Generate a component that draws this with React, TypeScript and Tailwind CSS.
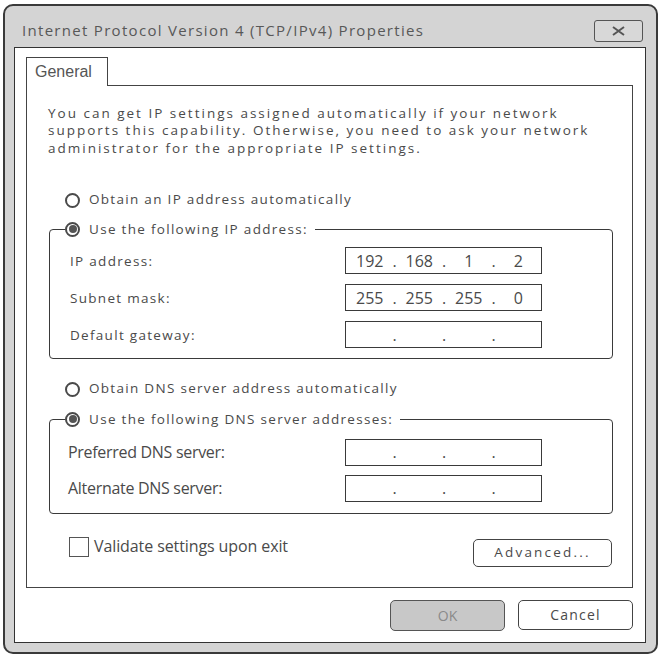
import React from "react";

const sans = "font-['Open_Sans',sans-serif]";

function Radio({ checked }: { checked?: boolean }) {
  return (
    <span className="grid h-[15px] w-[15px] shrink-0 place-items-center rounded-full border-2 border-[#4a4a4a] bg-white">
      {checked && <span className="h-[8px] w-[8px] rounded-full bg-[#555]" />}
    </span>
  );
}

function IpBox({ parts }: { parts: string[] }) {
  return (
    <div className="flex h-[27px] w-[197px] items-center border-[1.5px] border-[#3a3a3a] bg-white pl-[1px] text-[16px] text-[#4a4a4a]">
      {parts.map((p, i) => (
        <React.Fragment key={i}>
          {i > 0 && <span className="w-[4px] text-center">.</span>}
          <span className="w-[46px] text-center">{p}</span>
        </React.Fragment>
      ))}
    </div>
  );
}

function Row({ label, parts, tracked }: { label: string; parts: string[]; tracked?: boolean }) {
  return (
    <div className="flex items-center">
      <span
        className={
          tracked
            ? "w-[295px] pl-[20px] text-[13.5px] tracking-[1.3px] text-[#4a4a4a]"
            : "w-[295px] pl-[18px] text-[16px] tracking-[-0.3px] text-[#4a4a4a]"
        }
      >
        {label}
      </span>
      <IpBox parts={parts} />
    </div>
  );
}

function Group({ legend, children }: { legend: string; children: React.ReactNode }) {
  return (
    <fieldset className="ml-[22px] mr-[19px] rounded-[4px] border-[1.5px] border-[#3a3a3a]">
      <legend className="ml-[15px] flex items-center gap-[9px] pr-[7px] text-[13.5px] tracking-[1.3px] text-[#4a4a4a]">
        <Radio checked />
        <span>{legend}</span>
      </legend>
      {children}
    </fieldset>
  );
}

export default function App() {
  const empty = ["", "", "", ""];
  return (
    <div className={`h-[657px] w-[660px] bg-white pl-[3px] pt-[4px] ${sans}`}>
      <div className="flex h-[650px] w-[655px] flex-col rounded-[10px] border-2 border-[#3a3a3a] bg-[#d4d4d4] pb-[9px] pl-[9px] pr-[10px]">
        <div className="flex h-[41px] items-center justify-between pl-[8px] pr-[3px]">
          <span className="mt-[8px] text-[15px] tracking-[1.3px] text-[#585858]">
            Internet Protocol Version 4 (TCP/IPv4) Properties
          </span>
          <button className="mt-[8px] grid h-[22px] w-[49px] place-items-center rounded-[3px] border-[1.5px] border-[#555] bg-[#d8d8d8]">
            <svg width="13" height="10" viewBox="0 0 13 10">
              <path d="M1 1 L12 9 M12 1 L1 9" stroke="#555" strokeWidth="2" />
            </svg>
          </button>
        </div>

        <div className="flex flex-1 flex-col border-[1.5px] border-[#333] bg-white pl-[11px] pr-[12px] pt-[9px]">
          <div className="relative z-10 -mb-[1.5px] flex h-[29px] w-[82px] items-start border-[1.5px] border-b-0 border-[#444] bg-white pl-[8px] pt-[2px] font-['Liberation_Sans',sans-serif] text-[16px] text-[#555]">
            General
          </div>
          <div className="h-[503px] border-[1.5px] border-[#444]">
            <p className="ml-[21px] mt-[19px] text-[13.5px] leading-[17.5px] tracking-[2px] text-[#4a4a4a]">
              You can get IP settings assigned automatically if your network
              <br />
              supports this capability. Otherwise, you need to ask your network
              <br />
              administrator for the appropriate IP settings.
            </p>

            <div className="ml-[38px] mt-[33px] flex h-[20px] items-center gap-[9px] text-[13.5px] tracking-[1.3px] text-[#4a4a4a]">
              <Radio />
              <span className="-mt-[2px]">Obtain an IP address automatically</span>
            </div>

            <div className="mt-[9px]">
              <Group legend="Use the following IP address:">
                <div className="flex flex-col gap-[10px] pb-[10px] pt-[8px]">
                  <Row label="IP address:" parts={["192", "168", "1", "2"]} tracked />
                  <Row label="Subnet mask:" parts={["255", "255", "255", "0"]} tracked />
                  <Row label="Default gateway:" parts={empty} tracked />
                </div>
              </Group>
            </div>

            <div className="ml-[38px] mt-[20px] flex h-[20px] items-center gap-[9px] text-[13.5px] tracking-[1.3px] text-[#4a4a4a]">
              <Radio />
              <span className="-mt-[2px]">Obtain DNS server address automatically</span>
            </div>

            <div className="mt-[10px]">
              <Group legend="Use the following DNS server addresses:">
                <div className="flex flex-col gap-[9px] pb-[11px] pt-[9px]">
                  <Row label="Preferred DNS server:" parts={empty} />
                  <Row label="Alternate DNS server:" parts={empty} />
                </div>
              </Group>
            </div>

            <div className="ml-[42px] mr-[20px] mt-[22px] flex items-start justify-between">
              <label className="flex items-center gap-[5px] text-[16px] tracking-[-0.1px] text-[#4a4a4a]">
                <span className="h-[20px] w-[20px] border-[1.5px] border-[#555] bg-white" />
                <span className="-mt-[2px]">Validate settings upon exit</span>
              </label>
              <button className="mt-[3px] h-[28px] w-[139px] rounded-[5px] border-[1.5px] border-[#444] bg-white text-[13.5px] tracking-[2.2px] text-[#4a4a4a]">
                Advanced...
              </button>
            </div>
          </div>

          <div className="mt-[12px] flex justify-end gap-[13px]">
            <button className="h-[31px] w-[115px] rounded-[5px] border-[1.5px] border-[#555] bg-[#c8c8c8] text-[14px] text-[#8a8a8a]">
              OK
            </button>
            <button className="h-[30px] w-[115px] rounded-[5px] border-[1.5px] border-[#444] bg-white text-[14px] tracking-[1.2px] text-[#4a4a4a]">
              Cancel
            </button>
          </div>
        </div>
      </div>
    </div>
  );
}
